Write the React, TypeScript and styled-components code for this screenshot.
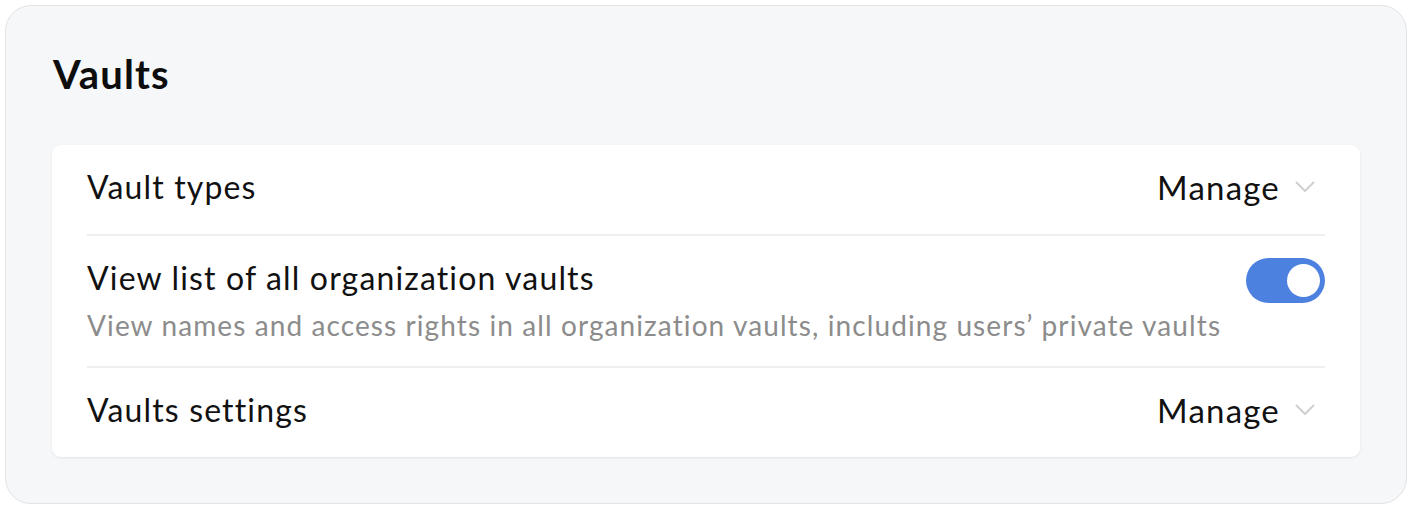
import * as React from 'react';
import styled, { createGlobalStyle } from 'styled-components';

const GlobalStyle = createGlobalStyle`
  html, body {
    margin: 0;
    padding: 0;
    background: #ffffff;
  }
  body {
    font-family: Lato, "Open Sans", sans-serif;
    color: #111;
  }
`;

type Row = {
  title: string,
  hint?: string,
  kind: 'manage' | 'toggle',
  on?: boolean,
};

const rows: Row[] = [
  { title: 'Vault types', kind: 'manage' },
  {
    title: 'View list of all organization vaults',
    hint: 'View names and access rights in all organization vaults, including users’ private vaults',
    kind: 'toggle',
    on: true,
  },
  { title: 'Vaults settings', kind: 'manage' },
];

function Chevron() {
  return (
    <svg width="20" height="12" viewBox="0 0 20 12" fill="none">
      <path d="M1.5 1.5 L10 10 L18.5 1.5" stroke="#cfd0d2" strokeWidth="2" strokeLinecap="round" strokeLinejoin="round" />
    </svg>
  );
}

export default function App() {
  const [state, setState] = React.useState<boolean[]>(rows.map((r) => !!r.on));

  const flip = (i:number) => {
    setState((s) => s.map((v, j) => (j === i ? !v : v)));
  };

  return (
    <>
      <GlobalStyle />
      <Page>
        <Panel>
          <Heading>Vaults</Heading>
          <Card>
            {rows.map((row, i) => (
              <Item key={row.title} last={i === rows.length - 1}>
                <Text hasHint={!!row.hint}>
                  <Title>{row.title}</Title>
                  {row.hint && <Hint>{row.hint}</Hint>}
                </Text>
                {row.kind === 'manage' ? (
                  <Manage type="button">
                    Manage
                    <Chevron />
                  </Manage>
                ) : (
                  <Switch type="button" on={state[i]} onClick={() => flip(i)}>
                    <Knob on={state[i]} />
                  </Switch>
                )}
              </Item>
            ))}
          </Card>
        </Panel>
      </Page>
    </>
  );
}

const Page = styled.div`
  padding: 5px 5px 5px 5px;
`;

const Panel = styled.section`
  box-sizing: border-box;
  width: 1402px;
  height: 499px;
  background: #f6f7f9;
  border: 1px solid #e2e3e6;
  border-radius: 26px;
  padding: 44px 46px 0 46px;
`;

const Heading = styled.h1`
  margin: 0 0 0 1px;
  font-size: 40px;
  font-weight: 700;
  letter-spacing: 1.1px;
  line-height: 48px;
  color: #0d0d0d;
`;

const Card = styled.div`
  margin-top: 47px;
  background: #fff;
  border-radius: 9px;
  box-shadow: 0 1px 3px rgba(0, 0, 0, 0.08);
  padding: 0 35px;
`;

const Item = styled.div<{ last: boolean }>`
  display: flex;
  align-items: center;
  justify-content: space-between;
  min-height: 89px;
  border-bottom: ${(p) => (p.last ? 'none' : '2px solid #eeeff1')};
`;

const Text = styled.div<{ hasHint: boolean }>`
  display: flex;
  flex-direction: column;
  padding: ${(p) => (p.hasHint ? '21px 0 23px 0' : '19px 0 25px 0')};
`;

const Title = styled.div`
  font-size: 32px;
  letter-spacing: 1.15px;
  line-height: 42px;
  color: #111;
`;

const Hint = styled.div`
  font-size: 28px;
  letter-spacing: 1.1px;
  line-height: 36px;
  color: #8c8c8c;
  margin-top: 8px;
`;

const Manage = styled.button`
  display: flex;
  align-items: center;
  gap: 15px;
  border: none;
  background: none;
  padding: 0 10px 0 0;
  margin-bottom: 5px;
  font-family: inherit;
  font-size: 33px;
  letter-spacing: 1.2px;
  color: #111;
  cursor: pointer;
`;

const Switch = styled.button<{ on: boolean }>`
  position: relative;
  width: 79px;
  height: 45px;
  border: none;
  border-radius: 23px;
  padding: 0;
  background: ${(p) => (p.on ? '#4d81e0' : '#c9cbcf')};
  cursor: pointer;
  margin-bottom: 42px;
`;

const Knob = styled.span<{ on: boolean }>`
  position: absolute;
  top: 6px;
  left: ${(p) => (p.on ? '41px' : '6px')};
  width: 33px;
  height: 33px;
  border-radius: 50%;
  background: #fff;
`;
